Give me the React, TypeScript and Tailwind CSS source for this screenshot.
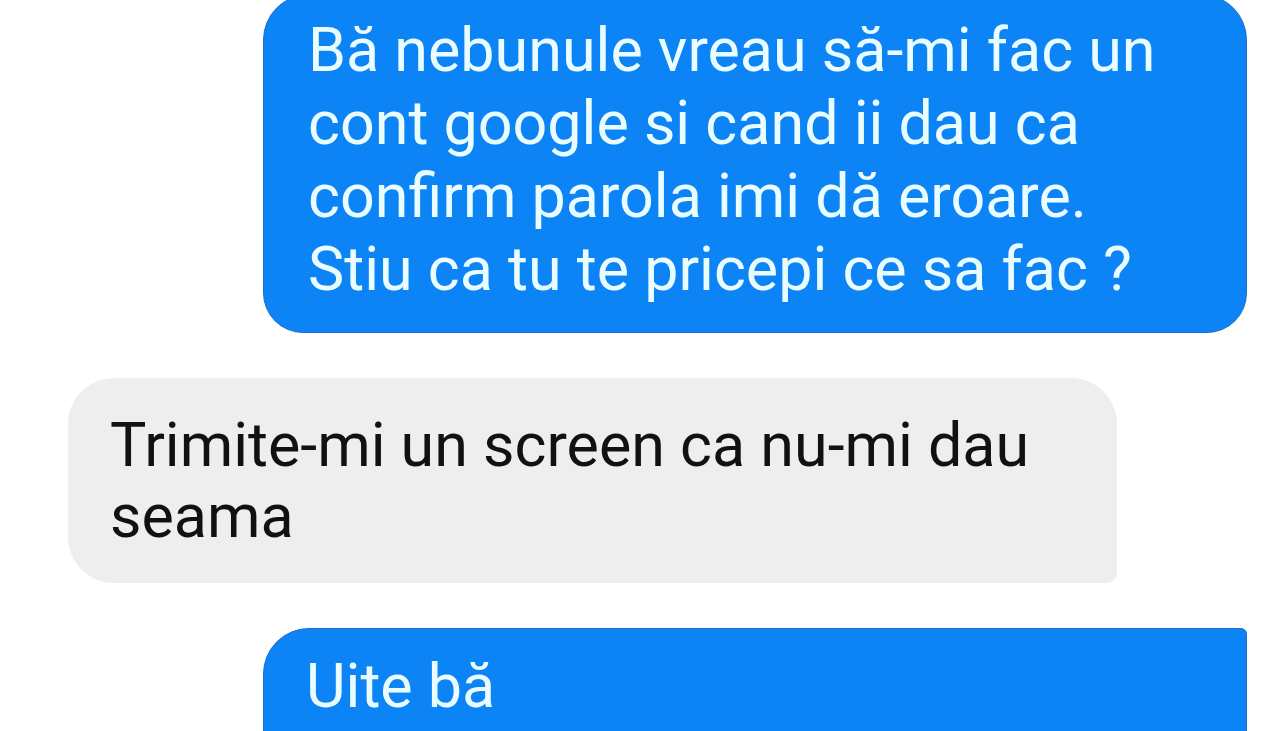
import React from 'react';

const blueText = 'text-[#e9fdff] text-[61px] leading-[73px]';

export default function App() {
    return (
        <div className="w-full h-[731px] overflow-hidden bg-white font-['Roboto','Liberation_Sans',sans-serif]">
            <div className="flex flex-col">
                {/* sent */}
                <div className="-mt-[6px] ml-[263px] w-[984px] h-[339px] bg-[#0d84f6] border border-[#1e6fcf] rounded-[46px] rounded-br-[40px] rounded-bl-[40px] pl-[44px] pt-[19px]">
                    <p className={blueText}>
                        Bă nebunule vreau să-mi fac un
                        <br />
                        cont google si cand ii dau ca
                        <br />
                        confirm parola imi dă eroare.
                        <br />
                        Stiu ca tu te pricepi ce sa fac ?
                    </p>
                </div>

                {/* received */}
                <div className="mt-[45px] ml-[68px] w-[1049px] h-[205px] bg-[#eeeeee] rounded-[46px] rounded-br-[10px] pl-[42px] pt-[32px]">
                    <p className="text-[#111111] text-[61px] leading-[71px]">
                        Trimite-mi un screen ca nu-mi dau
                        <br />
                        seama
                    </p>
                </div>

                {/* sent */}
                <div className="mt-[45px] ml-[263px] w-[984px] h-[160px] bg-[#0d84f6] border border-[#1e6fcf] rounded-tl-[46px] rounded-tr-[6px] pl-[42px] pt-[21px]">
                    <p className={blueText}>Uite bă</p>
                </div>
            </div>
        </div>
    );
}
